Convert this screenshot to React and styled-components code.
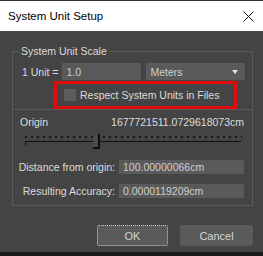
import React from "react";
import styled, { createGlobalStyle } from "styled-components";

const Global = createGlobalStyle`
  html, body {
    margin: 0;
    padding: 0;
    background: #1b1b1b;
  }
  * {
    box-sizing: border-box;
  }
`;

const Screen = styled.div`
  width: 263px;
  height: 256px;
  background: #1c1c1c;
  display: flex;
  flex-direction: column;
  font-family: "Liberation Sans", Arial, sans-serif;
  overflow: hidden;
`;

const Dialog = styled.div`
  height: 252px;
  display: flex;
  flex-direction: column;
`;

const TitleBar = styled.div`
  height: 31px;
  flex: none;
  background: #ffffff;
  border-top: 1px solid #2e2e2e;
  display: flex;
  align-items: center;
  justify-content: space-between;
  padding: 0 9px 0 8px;
`;

const Title = styled.span`
  font-size: 11.5px;
  color: #000;
`;

const Body = styled.div`
  flex: 1;
  background: #444444;
  padding: 14px 10px 0 12px;
  display: flex;
  flex-direction: column;
  color: #dcdcdc;
  font-size: 10.5px;
`;

const Group = styled.fieldset`
  margin: 0;
  padding: 0;
  border: 1px solid #5a5a5a;
  border-bottom: none;
  min-width: 0;
`;

const Legend = styled.legend`
  margin-left: 6px;
  padding: 0 2px;
  line-height: 12px;
  font-size: 10.5px;
`;

const UnitRow = styled.div`
  display: flex;
  align-items: center;
  margin-top: 6px;
  padding-left: 9px;
  height: 17px;
`;

const Label = styled.span`
  white-space: nowrap;
  text-align: ${(p) => (p.right ? "right" : "left")};
`;

const Field = styled.div`
  height: ${(p) => p.h || 17}px;
  width: ${(p) => (p.w ? `${p.w}px` : "auto")};
  margin-left: ${(p) => p.ml || 0}px;
  background: #5a5a5a;
  color: #cfcfcf;
  padding: 0 4px;
  display: flex;
  align-items: center;
  justify-content: space-between;
  white-space: nowrap;
`;

const Arrow = styled.span`
  width: 0;
  height: 0;
  border-left: 3px solid transparent;
  border-right: 3px solid transparent;
  border-top: 4px solid #e6e6e6;
  margin-right: 3px;
`;

const Highlight = styled.div`
  margin: 1px 0 0 41px;
  width: 183px;
  height: 28px;
  border: 3px solid #e00d0d;
  display: flex;
  align-items: center;
  padding-left: 7px;
  gap: 4px;
`;

const Check = styled.span`
  width: 12px;
  height: 12px;
  background: #5c5c5c;
  flex: none;
`;

const OriginGroup = styled.div`
  border: 1px solid #5a5a5a;
  padding: 4px 8px 7px 0;
  display: flex;
  flex-direction: column;
`;

const OriginRow = styled.div`
  display: flex;
  justify-content: space-between;
  align-items: center;
  height: 16px;
  padding-left: 7px;
`;

const Slider = styled.div`
  position: relative;
  height: 15px;
  margin: 4px 2px 0 12px;
`;

const Dots = styled.div`
  margin-top: 2px;
  height: 2px;
  background: repeating-linear-gradient(
    to right,
    #161616 0 2px,
    transparent 2px 6px
  );
`;

const Track = styled.div`
  margin-top: 3px;
  height: 4px;
  border-top: 1px solid #101010;
  border-left: 1px solid #101010;
  width: 216px;
`;

const Thumb = styled.div`
  position: absolute;
  top: 0;
  width: 7px;
  height: 15px;
  background: #4a4a4a;
  border-right: 2px solid #0e0e0e;
  border-bottom: 2px solid #0e0e0e;
`;

const FieldGrid = styled.div`
  display: grid;
  grid-template-columns: 102px 125px;
  column-gap: 4px;
  row-gap: 10px;
  align-items: center;
  margin-top: ${(p) => p.mt}px;
`;

const Buttons = styled.div`
  display: flex;
  justify-content: flex-end;
  gap: 12px;
  margin-top: 19px;
`;

const Button = styled.div`
  width: ${(p) => p.w}px;
  height: 21px;
  border-radius: 2px;
  background: #5a5a5a;
  color: #d4d4d4;
  font-size: 11px;
  display: flex;
  align-items: center;
  justify-content: center;
  border: 1px ${(p) => (p.focused ? "dotted #c8c8c8" : "solid #5a5a5a")};
`;

const CloseIcon = () => (
  <svg width="11" height="11" viewBox="0 0 11 11">
    <path d="M0.5 0.5 L10.5 10.5 M10.5 0.5 L0.5 10.5" stroke="#111" strokeWidth="1" />
  </svg>
);

export default function App() {
  return (
    <Screen>
      <Global />
      <Dialog>
        <TitleBar>
          <Title>System Unit Setup</Title>
          <CloseIcon />
        </TitleBar>
        <Body>
          <Group>
            <Legend>System Unit Scale</Legend>
            <UnitRow>
              <Label>1 Unit =</Label>
              <Field w={79} ml={4}>1.0</Field>
              <Field w={99} ml={5}>
                Meters
                <Arrow />
              </Field>
            </UnitRow>
            <Highlight>
              <Check />
              <span>Respect System Units in Files</span>
            </Highlight>
          </Group>
          <OriginGroup>
            <OriginRow>
              <span>Origin</span>
              <span>1677721511.0729618073cm</span>
            </OriginRow>
            <Slider>
              <Dots />
              <Track />
              <Thumb style={{ left: 68 }} />
            </Slider>
            <FieldGrid mt={11}>
              <Label right>Distance from origin:</Label>
              <Field h={14}>100.00000066cm</Field>
              <Label right>Resulting Accuracy:</Label>
              <Field h={14}>0.0000119209cm</Field>
            </FieldGrid>
          </OriginGroup>
          <Buttons>
            <Button w={71} focused>OK</Button>
            <Button w={73}>Cancel</Button>
          </Buttons>
        </Body>
      </Dialog>
    </Screen>
  );
}
